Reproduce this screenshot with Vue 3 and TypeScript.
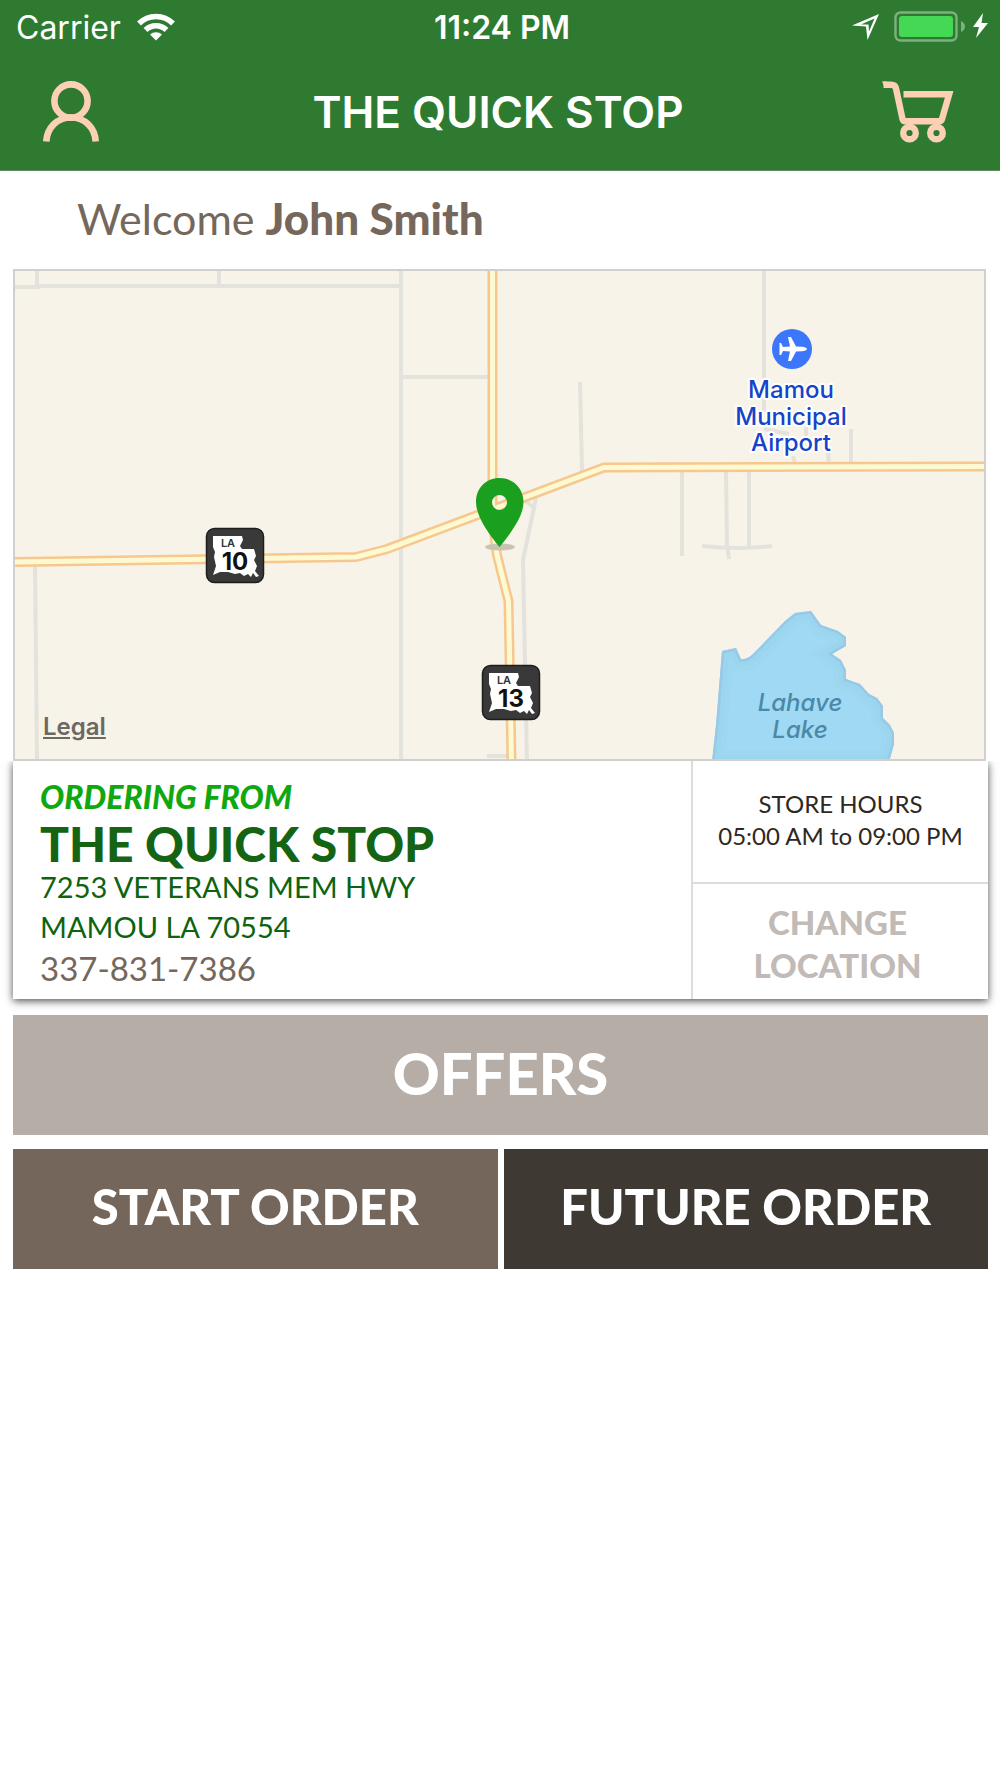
<script setup lang="ts">
interface Shield {
  route: string
  x: number
  y: number
}

const shields: Shield[] = [
  { route: '10', x: 206, y: 528 },
  { route: '13', x: 482, y: 665 },
]

// Unpaved and local roads
const minorRoads: string[] = [
  'M15 287H37L42 286H401',
  'M37 271V287',
  'M219 271V286',
  'M401 271V761',
  'M399 377H489',
  'M764 271V412',
  'M580 382L582 472',
  'M851 429V464',
  'M828 452L829 464M806 427V436M793 456L795 464M764 429L789 434',
  'M682 471V556',
  'M726 471L727 545L729 559',
  'M749 471V549',
  'M702 546Q738 550 772 546',
  'M536 498L523 560L525 664L527 761M524 500L533 507',
  'M35 565L37 761',
  'M487 756H507',
]

// State highways, drawn first as casing and then as fill
const highways: string[] = [
  'M15 562L356 557L387 549L604 467.500L985 466.500',
  'M492.500 271V520L497 555L508.500 601L511.500 761',
]
</script>

<template>
  <div class="app">
    <header class="header">
      <div class="status">
        <div class="status-side">
          <span>Carrier</span>
          <svg class="wifi" viewBox="0 0 38 28" aria-hidden="true">
            <g fill="none" stroke="#fff" stroke-width="5.500">
              <path d="M2 10.500A24 24 0 0 1 36 10.500" />
              <path d="M8.500 17A15 15 0 0 1 29.500 17" />
            </g>
            <path d="M13 21.500A9 9 0 0 1 25 21.500L19 27.500Z" fill="#fff" />
          </svg>
        </div>
        <strong class="clock">11:24 PM</strong>
        <div class="status-side end">
          <svg class="power" viewBox="0 0 136 32" aria-hidden="true">
            <path d="M0 14.500L27 3L15.500 29L14 15.500ZM9 13.500L16.500 13.500L17 20.500L22.500 7.500Z" fill="#fff" fill-rule="evenodd" />
            <rect x="43.500" y="1.500" width="61" height="28" rx="5" fill="none" stroke="#7fb080" stroke-width="2.400" />
            <rect x="47" y="5" width="54" height="21" rx="3" fill="#45d854" />
            <path d="M109 10Q113 12 113 15.500T109 21Z" fill="#7fb080" />
            <path d="M131 2L121 16H127L124 27L136 12H129.500Z" fill="#fff" />
          </svg>
        </div>
      </div>
      <div class="nav">
        <button class="icon-button" type="button" aria-label="Account">
          <svg class="user" viewBox="0 0 58 62" aria-hidden="true">
            <g fill="none" stroke="#fbd0b4" stroke-width="6.600">
              <circle cx="29" cy="20" r="16.600" />
              <path d="M4.300 60.500C5 47 15 36.500 29 36.500S53 47 53.700 60.500" />
            </g>
          </svg>
        </button>
        <h1 class="title">THE QUICK STOP</h1>
        <button class="icon-button" type="button" aria-label="Cart">
          <svg class="cart" viewBox="0 0 72 62" aria-hidden="true">
            <g fill="none" stroke="#fbd0b4" stroke-width="6.400">
              <path d="M1.500 3.700H9Q13.200 3.700 14 7.500L20.500 38Q21.200 40.300 23.500 40.300H57Q59.500 40.300 60 38L67.200 13.200H21.500" />
              <circle cx="27.500" cy="52" r="6.300" />
              <circle cx="54.500" cy="52" r="6.300" />
            </g>
            <path d="M0 .5H5V7H3Z" fill="#fbd0b4" />
          </svg>
        </button>
      </div>
    </header>

    <main>
      <p class="welcome">Welcome <strong>John Smith</strong></p>

      <div class="content">
        <section class="map" aria-label="Store map">
          <svg class="map-drawing" viewBox="15 271 969 488">
            <defs>
              <clipPath id="lake-clip">
                <path id="lake" d="M712 762L716 725L722 651L736 648L741 659Q747 660 753 654L785 621L795 613L811 611L821 625L838 631L846 637V646L832 654L841 660L846 670V679L860 684L869 694L877 698L883 706V718L890 725L894 733V744L889 762Z" />
              </clipPath>
            </defs>
            <g class="minor">
              <path v-for="road in minorRoads" :key="road" :d="road" />
            </g>
            <path v-for="road in highways" :key="'c' + road" class="casing" :d="road" />
            <path v-for="road in highways" :key="'f' + road" class="fill" :d="road" />

            <g clip-path="url(#lake-clip)">
              <use href="#lake" fill="#9fd9f3" />
              <use href="#lake" fill="none" stroke="#98d3ea" stroke-width="24" stroke-opacity=".3" />
              <use href="#lake" fill="none" stroke="#98d3ea" stroke-width="14" stroke-opacity=".4" />
              <use href="#lake" fill="none" stroke="#98c9e8" stroke-width="5" />
            </g>
            <text class="lake-name" x="800" y="711">Lahave</text>
            <text class="lake-name" x="800" y="738">Lake</text>

            <circle cx="792" cy="349" r="20" fill="#3b76fb" />
            <path
              d="M807 349Q806 351 802 351.200L796 351.500L791 361H788L790 351.500L783 351L781 355H779.500V343H781L783 347L790 346.500L788 337H791L796 346.500L802 346.800Q806 347 807 349Z"
              fill="#fff"
            />
            <g class="airport-name">
              <text x="791" y="398">Mamou</text>
              <text x="791" y="425">Municipal</text>
              <text x="791" y="451">Airport</text>
            </g>

            <g v-for="shield in shields" :key="shield.route" :transform="`translate(${shield.x} ${shield.y})`">
              <rect x=".5" y=".5" width="57" height="54" rx="8" fill="#393939" stroke="#1e1e1e" stroke-width="1.500" />
              <path
                d="M7 8H36L37 12L34 18L36 21H48L50 28L48 32L51 38L49 43L53 48L50 49L47 45L45 49L42 46L38 48L34 45L29 46L22 44L14 44L7 47L10 38L8 29L9 24L7 19Z"
                fill="#fff"
              />
              <text class="shield-state" x="22" y="19">LA</text>
              <text class="shield-route" x="29" y="42">{{ shield.route }}</text>
            </g>

            <ellipse cx="500" cy="547" rx="15" ry="3.500" fill="#c9c4b2" />
            <path
              d="M499.500 478C486 478 476 488 476 502C476 516 488 533 499.500 547C511 533 523.500 516 523.500 502C523.500 488 513 478 499.500 478ZM499.500 495A7.500 7.500 0 1 1 499.500 510A7.500 7.500 0 1 1 499.500 495Z"
              fill="#1a9f1e"
              fill-rule="evenodd"
            />
          </svg>
          <a class="legal" href="#legal">Legal</a>
        </section>

        <section class="store">
          <div class="store-info">
            <p class="ordering">ORDERING FROM</p>
            <h2 class="store-name">THE QUICK STOP</h2>
            <address class="address">7253 VETERANS MEM HWY<br />MAMOU LA 70554</address>
            <a class="phone" href="tel:3378317386">337-831-7386</a>
          </div>
          <div class="store-side">
            <p class="hours">STORE HOURS<br />05:00 AM to 09:00 PM</p>
            <button class="change" type="button">CHANGE<br />LOCATION</button>
          </div>
        </section>

        <button class="action offers" type="button">OFFERS</button>
        <div class="orders">
          <button class="action start" type="button">START ORDER</button>
          <button class="action future" type="button">FUTURE ORDER</button>
        </div>
      </div>
    </main>
  </div>
</template>

<style>
body {
  margin: 0;
  background: #fff;
}
</style>

<style scoped>
.app {
  font-family: Lato, "Liberation Sans", sans-serif;
  color: #75675b;
}

p,
h1,
h2 {
  margin: 0;
}

svg {
  display: block;
}

button {
  margin: 0;
  padding: 0;
  border: 0;
  background: none;
  font: inherit;
  cursor: pointer;
}

.header {
  color: #fff;
  background: #2e7a30;
  font-family: Inter, "Liberation Sans", sans-serif;
  border-bottom: 1px solid #5f8c5f;
}

.status {
  display: flex;
  align-items: center;
  height: 54px;
  padding: 0 12px 0 16px;
  font-size: 32px;
}

.status-side {
  display: flex;
  flex: 1;
  align-items: center;
  gap: 16px;
}

.end {
  justify-content: flex-end;
}

.wifi {
  width: 38px;
  height: 28px;
}

.power {
  width: 136px;
  height: 32px;
}

.clock {
  font-weight: 600;
}

.nav {
  display: grid;
  grid-template-columns: 1fr auto 1fr;
  align-items: center;
  height: 116px;
  padding: 0 46px 0 42px;
}

.icon-button {
  justify-self: start;
}

.icon-button:last-child {
  justify-self: end;
}

.user {
  width: 58px;
  height: 62px;
}

.cart {
  width: 72px;
  height: 62px;
}

.title {
  font-size: 44px;
  font-weight: 600;
}

.welcome {
  padding: 19px 77px 22px;
  font-size: 43px;
  line-height: 56px;
}

.welcome strong {
  font-size: 44px;
  font-weight: 900;
}

.content {
  margin: 0 12px 0 13px;
}

.map {
  position: relative;
  margin-right: 2px;
  border: 2px solid #d0d0ce;
  background: #f7f3e8;
}

.map-drawing {
  width: 100%;
  font-family: Inter, "Liberation Sans", sans-serif;
  text-anchor: middle;
}

.minor {
  fill: none;
  stroke: #e4e2dc;
  stroke-width: 4;
}

.casing,
.fill {
  fill: none;
  stroke: #f6c88f;
  stroke-width: 10;
}

.fill {
  stroke: #fdfad2;
  stroke-width: 5;
}

.lake-name {
  fill: #4a88a8;
  font-size: 24px;
  font-style: italic;
  font-weight: 500;
}

.airport-name {
  fill: #1743c8;
  stroke: #fff;
  stroke-width: 4;
  stroke-linejoin: round;
  paint-order: stroke;
  font-size: 24px;
  font-weight: 500;
}

.shield-state {
  fill: #333;
  font-size: 11px;
  font-weight: 600;
}

.shield-route {
  fill: #111;
  font-size: 24px;
  font-weight: 700;
}

.legal {
  position: absolute;
  left: 28px;
  bottom: 16px;
  color: #6b6963;
  font-family: Inter, "Liberation Sans", sans-serif;
  font-size: 24px;
  font-weight: 600;
  line-height: 32px;
}

.store {
  display: flex;
  min-height: 238px;
  background: #fff;
  box-shadow: 0 2px 8px rgba(0, 0, 0, 0.7);
  clip-path: inset(0 -16px -16px -16px);
}

.store-info {
  flex: 1;
  padding: 12px 27px 8px;
}

.ordering {
  color: #0fa80f;
  font-size: 32px;
  font-style: italic;
  font-weight: 900;
  line-height: 48px;
}

.store-name {
  color: #146414;
  font-size: 48px;
  font-weight: 900;
  line-height: 46px;
}

.address {
  color: #0d640d;
  font-size: 29px;
  font-style: normal;
  line-height: 40px;
}

.phone {
  display: block;
  color: #75675b;
  font-size: 33px;
  line-height: 42px;
  text-decoration: none;
}

.store-side {
  display: flex;
  flex: 0 0 295px;
  flex-direction: column;
  border-left: 2px solid #dcdcdc;
}

.hours {
  flex: 1;
  padding-top: 27px;
  border-bottom: 2px solid #dcdcdc;
  color: #2d2823;
  font-size: 24px;
  line-height: 32px;
  text-align: center;
}

.change {
  height: 115px;
  padding: 4px 6px 0 0;
  color: #c1bab6;
  font-size: 33px;
  font-weight: 900;
  line-height: 43px;
}

.action {
  height: 120px;
  padding-bottom: 6px;
  color: #fff;
  font-size: 49px;
  font-weight: 900;
}

.offers {
  width: 100%;
  margin-top: 16px;
  background: #b6ada6;
  font-size: 58px;
}

.orders {
  display: grid;
  grid-template-columns: 1fr 1fr;
  gap: 6px;
  margin-top: 14px;
}

.start {
  background: #74665a;
}

.future {
  background: #3f3933;
}
</style>
